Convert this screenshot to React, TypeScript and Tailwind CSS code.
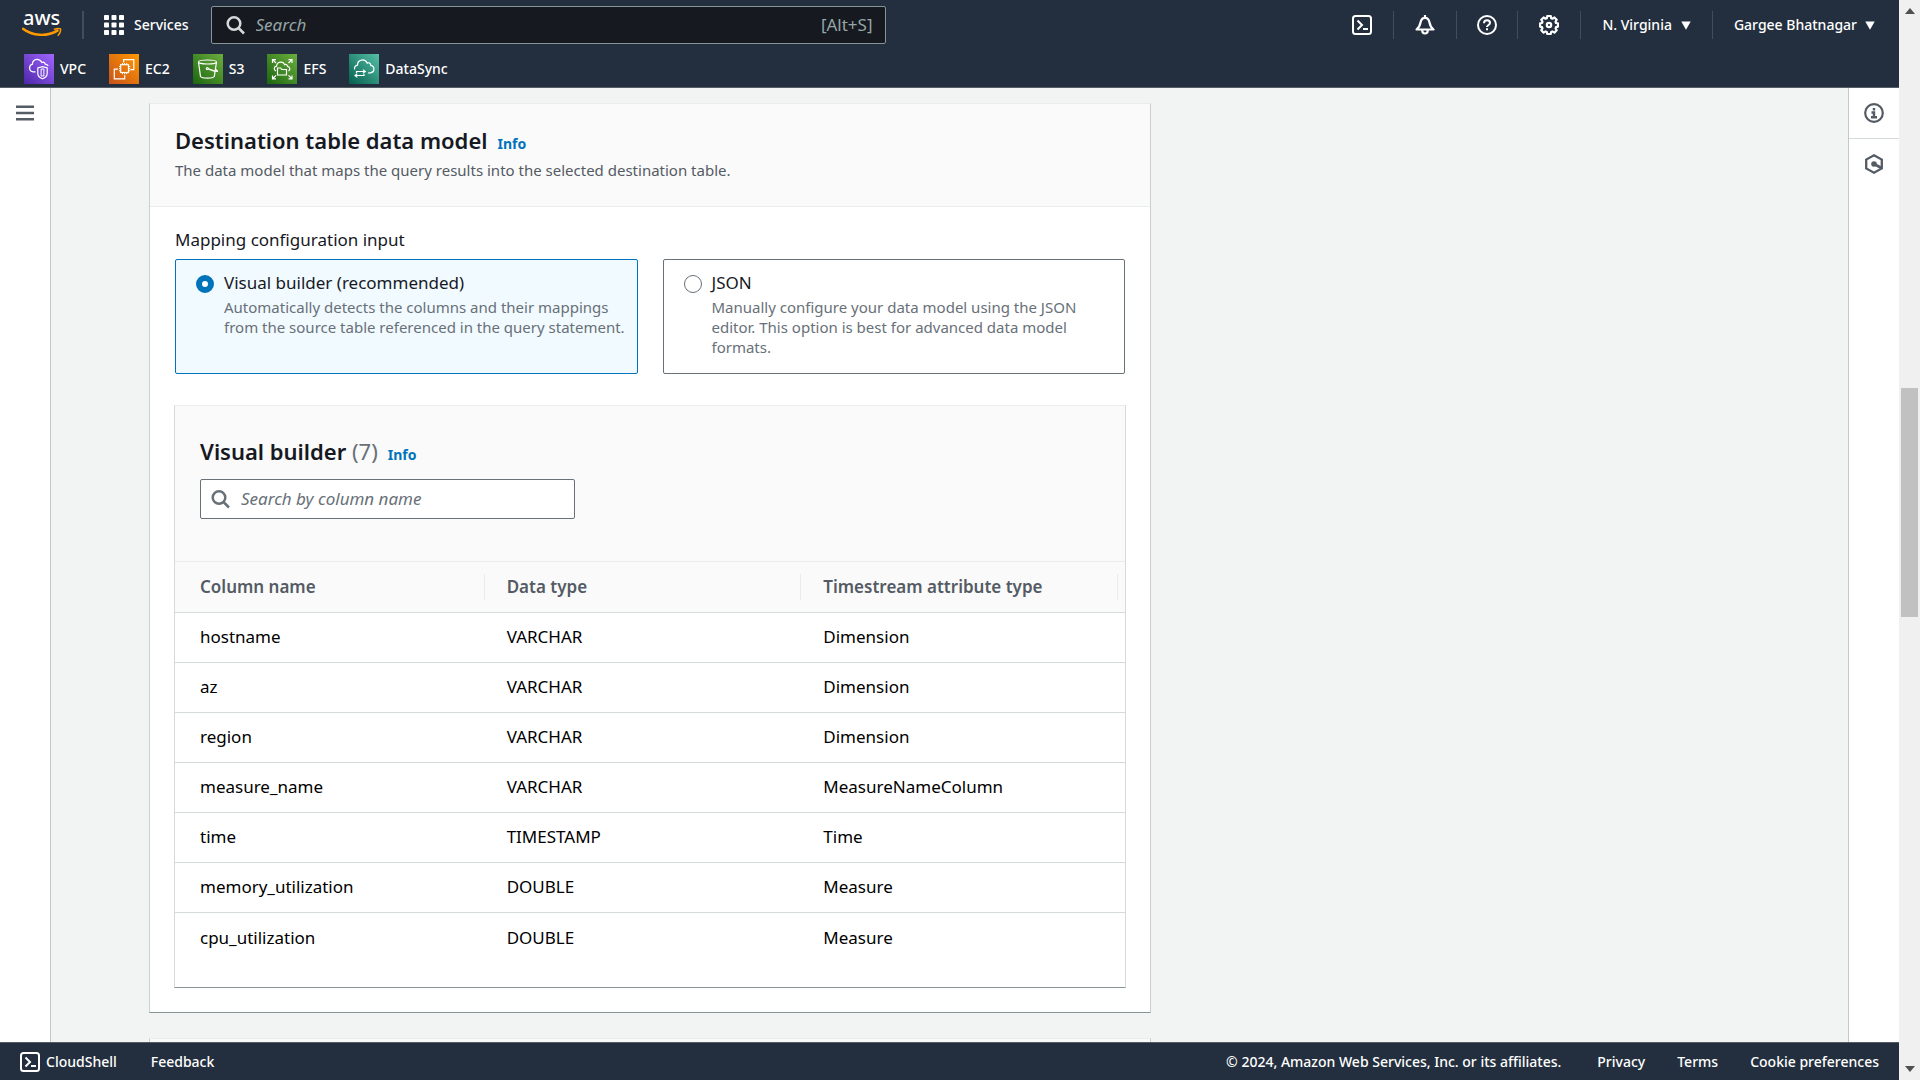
import { useState } from 'react'
import type { ReactNode } from 'react'

interface Column {
  name: string
  type: string
  attribute: string
}

const columns: Column[] = [
  { name: 'hostname', type: 'VARCHAR', attribute: 'Dimension' },
  { name: 'az', type: 'VARCHAR', attribute: 'Dimension' },
  { name: 'region', type: 'VARCHAR', attribute: 'Dimension' },
  { name: 'measure_name', type: 'VARCHAR', attribute: 'MeasureNameColumn' },
  { name: 'time', type: 'TIMESTAMP', attribute: 'Time' },
  { name: 'memory_utilization', type: 'DOUBLE', attribute: 'Measure' },
  { name: 'cpu_utilization', type: 'DOUBLE', attribute: 'Measure' },
]

const headings = ['Column name', 'Data type', 'Timestream attribute type']

const mappingOptions = [
  {
    id: 'visual',
    label: 'Visual builder (recommended)',
    description:
      'Automatically detects the columns and their mappings from the source table referenced in the query statement.',
  },
  {
    id: 'json',
    label: 'JSON',
    description:
      'Manually configure your data model using the JSON editor. This option is best for advanced data model formats.',
  },
]

function AwsLogo() {
  return (
    <svg width="40" height="48" viewBox="0 0 40 48" aria-label="aws">
      <text x="1" y="24" fill="#fff" fontSize="20" fontWeight="500" fontFamily="Noto Sans, sans-serif">
        aws
      </text>
      <path d="M1 27.800C10.500 35.200 25 35.800 35.500 29.600" fill="none" stroke="#ff9900" strokeWidth="2.400" strokeLinecap="round" />
      <path d="M32.500 28.200c2.500-.8 5-.9 6-.3.500 1.600-.4 4.200-2.300 6.400" fill="none" stroke="#ff9900" strokeWidth="1.500" strokeLinecap="round" />
    </svg>
  )
}

function GridIcon() {
  return (
    <svg width="20" height="20" viewBox="0 0 20 20" fill="#fff" aria-hidden="true">
      {[0, 7.5, 15].map((y) =>
        [0, 7.5, 15].map((x) => <rect key={`${x}-${y}`} x={x} y={y} width="5" height="5" rx="0.8" />)
      )}
    </svg>
  )
}

function SearchIcon({ className }: { className: string }) {
  return (
    <svg width="20" height="20" viewBox="0 0 20 20" fill="none" stroke="currentColor" strokeWidth="2.500" className={className} aria-hidden="true">
      <circle cx="8" cy="8.500" r="6.300" />
      <path d="m12.500 13 5.500 5.500" />
    </svg>
  )
}

function TerminalIcon() {
  return (
    <svg width="20" height="20" viewBox="0 0 20 20" fill="none" stroke="currentColor" strokeWidth="2" aria-hidden="true">
      <rect x="1" y="1" width="18" height="18" rx="2.500" />
      <path d="m5.500 5.500 4.500 4.500-4.500 4.500M11 14h5" />
    </svg>
  )
}

function BellIcon() {
  return (
    <svg width="20" height="20" viewBox="0 0 20 20" fill="none" stroke="currentColor" strokeWidth="2.200" strokeLinejoin="round" aria-hidden="true">
      <path d="M10 0v2.500M1.500 14.500C4 12.500 5 10.500 5.500 7.500 6 4.500 7.500 2.800 10 2.800s4 1.700 4.500 4.700c.5 3 1.500 5 4 7z" />
      <path d="M7.300 14.500v1.300a2.700 2.700 0 0 0 5.400 0v-1.300" />
    </svg>
  )
}

function HelpIcon() {
  return (
    <svg width="20" height="20" viewBox="0 0 20 20" fill="none" stroke="currentColor" strokeWidth="2" aria-hidden="true">
      <circle cx="10" cy="10" r="9" />
      <path d="M7 8.300C7 6.300 8.200 5.200 10 5.200s3 1.100 3 2.700c0 2-3 2.100-3 4.100" />
      <path d="M10 13.300v2" />
    </svg>
  )
}

function GearIcon() {
  return (
    <svg width="20" height="20" viewBox="0 0 20 20" fill="none" stroke="currentColor" strokeWidth="2.200" strokeLinejoin="round" aria-hidden="true">
      <path d="M8.300 1h3.400l.5 2.200 1.200.5 2-1.200 2.300 2.300-1.200 2 .5 1.200 2 .4v3.200l-2 .5-.5 1.200 1.200 2-2.300 2.300-2-1.200-1.200.5-.5 2.100H8.300l-.5-2.100-1.200-.5-2 1.200-2.300-2.300 1.200-2-.5-1.200-2-.5V8.400l2-.4.5-1.200-1.200-2 2.300-2.300 2 1.200 1.200-.5z" />
      <circle cx="10" cy="10" r="2.200" />
    </svg>
  )
}

function Caret() {
  return (
    <svg width="10" height="9" viewBox="0 0 10 9" fill="currentColor" aria-hidden="true">
      <path d="M.3.500h9.400L5 8.800z" />
    </svg>
  )
}

function MenuIcon() {
  return (
    <svg width="18" height="16" viewBox="0 0 18 16" stroke="currentColor" strokeWidth="2.500" aria-hidden="true">
      <path d="M0 1.700h18M0 8h18M0 14.300h18" />
    </svg>
  )
}

function InfoIcon() {
  return (
    <svg width="20" height="20" viewBox="0 0 20 20" fill="none" stroke="currentColor" strokeWidth="2.200" aria-hidden="true">
      <circle cx="10" cy="10" r="8.800" />
      <path d="M10 5v2.500M7.500 9.500H10V14M7 14.200h6" strokeWidth="2.400" />
    </svg>
  )
}

function HexIcon() {
  return (
    <svg width="20" height="20" viewBox="0 0 20 20" fill="none" stroke="currentColor" strokeWidth="2.300" aria-hidden="true">
      <path d="m10 1.300 7.800 4.300v8.800L10 18.700l-7.800-4.300V5.600z" />
      <circle cx="10" cy="10" r="2.800" fill="currentColor" stroke="none" />
      <path d="m10 10 7.500 4" strokeWidth="2.600" />
    </svg>
  )
}

interface ServiceIconProps {
  id: string
  from: string
  to: string
  children: ReactNode
}

function ServiceIcon({ id, from, to, children }: ServiceIconProps) {
  return (
    <svg width="30" height="30" viewBox="0 0 30 30" aria-hidden="true">
      <defs>
        <linearGradient id={id} x1="0" y1="1" x2="1" y2="0">
          <stop offset="0" stopColor={from} />
          <stop offset="1" stopColor={to} />
        </linearGradient>
      </defs>
      <rect width="30" height="30" fill={`url(#${id})`} />
      <g fill="none" stroke="#fff" strokeWidth="1.200">
        {children}
      </g>
    </svg>
  )
}

const favorites = [
  {
    name: 'VPC',
    icon: (
      <ServiceIcon id="vpc" from="#4d27a8" to="#a166ff">
        <path d="M11.500 17.800H9.300c-2.200-.3-3.700-1.800-3.700-3.900 0-2 1.200-3.400 2.900-3.800C8.300 7.500 10.300 5.400 13 5.400c2.200 0 4 1.200 4.900 3.200 1.300-.9 3-.3 3.300 1.500 1.500.2 2.500.9 3 2" />
        <path d="m18.500 12.600 4.700 1.300v5.300c0 2.600-1.800 4.500-4.700 5.600-2.900-1.100-4.700-3-4.700-5.600v-5.300z" />
        <path d="M17.100 15v7M19.900 15v7M17.100 15h2.800M17.100 22h2.800" strokeWidth="1" />
      </ServiceIcon>
    ),
  },
  {
    name: 'EC2',
    icon: (
      <ServiceIcon id="ec2" from="#c8511b" to="#ff9900">
        <path d="M14.600 8.500V5.600h10.200v10H21.500M9 15.200H5.300v9.600h10.400v-3.500" />
        <rect x="11.700" y="10.700" width="7.800" height="7.800" />
        <path d="M13.500 9v1.500M15.600 9v1.500M17.700 9v1.500M13.500 18.700v1.500M15.600 18.700v1.500M17.700 18.700v1.500M10 12.500h1.500M10 14.600h1.500M10 16.700h1.500M19.700 12.500h1.500M19.700 14.600h1.500M19.700 16.700h1.500" strokeWidth="1" />
      </ServiceIcon>
    ),
  },
  {
    name: 'S3',
    icon: (
      <ServiceIcon id="s3" from="#1b660f" to="#6cae3e">
        <ellipse cx="14.500" cy="8" rx="9" ry="2" />
        <path d="M5.500 8l2 14.500c1.500 2.200 12.300 2.200 13.800 0L23.500 8" />
        <circle cx="14.300" cy="14.500" r="1" />
        <path d="M15.300 14.900c3 1.300 6.500 2.500 9 2.600.6-.6-.6-1.600-2.300-2.500" />
      </ServiceIcon>
    ),
  },
  {
    name: 'EFS',
    icon: (
      <ServiceIcon id="efs" from="#1b660f" to="#6cae3e">
        <path d="M5.500 9V5.600H9M5.800 5.800 9 9M21.500 5.600H25V9M24.700 5.800 21.500 9M5.500 21.500v3.300H9M5.800 24.500 9 21.300M21.500 24.800H25v-3.300M24.700 24.500l-3.200-3.200" />
        <path d="M9 17c-2.500-1-2.300-4.500.6-4.800.4-5 6.600-5.300 8-1.600 1.600-.7 2.800.2 3 1.800 2.600.5 3 3.600.9 4.600" />
        <path d="M10.500 21v-7h3.200l1 1.500H19.500V21z" />
      </ServiceIcon>
    ),
  },
  {
    name: 'DataSync',
    icon: (
      <ServiceIcon id="datasync" from="#055f4e" to="#56c0a7">
        <path d="M5.600 15.500c-.5-2.200.7-4 2.900-4.400-.2-5.700 7.700-7 9.700-2 1.700-.9 3.300.1 3.600 2.300 4.300.8 4 6.800-.2 7.400h-2.400" />
        <path d="M7.500 19v-1.500h8.800M14 15.600l2.300 1.900-2.300 1.900M15 20v1.500H6M8.300 19.600l-2.300 1.900 2.300 1.900" />
      </ServiceIcon>
    ),
  },
]

function Divider() {
  return <span className="h-7 w-px bg-[#414d5c]" />
}

function Header() {
  return (
    <header className="h-[88px] shrink-0 border-b border-[#545b64] bg-[#232f3e] text-sm font-medium text-white">
      <div className="flex h-[50px] items-center">
        <a href="#" className="ml-[22px]">
          <AwsLogo />
        </a>
        <span className="ml-5 h-7 w-0.5 bg-[#414d5c]" />
        <button className="ml-5 flex items-center gap-2.5">
          <GridIcon />
          Services
        </button>
        <label className="ml-[22px] flex h-[38px] w-[675px] items-center rounded-xs border border-[#879596] bg-[#16191f] px-3 text-[#95a5a6]">
          <SearchIcon className="ml-0.5 text-[#d5dbdb]" />
          <input
            type="search"
            aria-label="Search"
            placeholder="Search"
            className="ml-2.5 min-w-0 flex-1 bg-transparent text-[17px] font-normal outline-none placeholder:italic placeholder:text-[#95a5a6]"
          />
          <span className="text-[17px] font-normal">[Alt+S]</span>
        </label>
        <nav className="ml-auto mr-6 flex items-center">
          <button aria-label="CloudShell" className="mr-[21px]">
            <TerminalIcon />
          </button>
          <Divider />
          <button aria-label="Notifications" className="mx-[21px]">
            <BellIcon />
          </button>
          <Divider />
          <button aria-label="Help" className="mx-5">
            <HelpIcon />
          </button>
          <Divider />
          <button aria-label="Settings" className="mx-[21px]">
            <GearIcon />
          </button>
          <Divider />
          <button className="mx-[21px] flex items-center gap-[9px]">
            N. Virginia
            <Caret />
          </button>
          <Divider />
          <button className="ml-[21px] flex items-center gap-2">
            Gargee Bhatnagar
            <Caret />
          </button>
        </nav>
      </div>
      <nav className="flex items-center gap-[23px] pl-6 pt-1">
        {favorites.map((service) => (
          <a key={service.name} href="#" className="flex items-center gap-1.5">
            {service.icon}
            {service.name}
          </a>
        ))}
      </nav>
    </header>
  )
}

function InfoLink() {
  return (
    <a href="#" className="text-sm font-bold text-[#0073bb]">
      Info
    </a>
  )
}

function MappingInput() {
  const [mode, setMode] = useState('visual')

  return (
    <fieldset className="px-px">
      <legend className="mb-[7px] text-[17px] leading-6">Mapping configuration input</legend>
      <div className="grid grid-cols-2 gap-[25px]">
        {mappingOptions.map((option) => (
          <label
            key={option.id}
            className="flex min-h-[115px] gap-2.5 rounded-xs border border-[#687078] pb-3 pl-5 pr-2.5 pt-[11px] has-checked:border-[#0073bb] has-checked:bg-[#f1faff]"
          >
            <input
              type="radio"
              name="mapping"
              checked={mode === option.id}
              onChange={() => setMode(option.id)}
              className="mt-1 size-[18px] shrink-0 appearance-none rounded-full border border-[#687078] bg-white checked:border-[6px] checked:border-[#0073bb]"
            />
            <span>
              <span className="block text-[17px] leading-6">{option.label}</span>
              <span className="mt-0.5 block text-[15px] leading-5 text-[#687078]">{option.description}</span>
            </span>
          </label>
        ))}
      </div>
    </fieldset>
  )
}

function VisualBuilder() {
  return (
    <section className="mt-[31px] border border-t-[#eaeded] border-x-[#d5dbdb] border-b-[#879596]">
      <div className="border-b border-[#eaeded] bg-[#fafafa] px-[25px] pb-[42px] pt-[30px]">
        <div className="flex items-baseline gap-2.5">
          <h3 className="text-[22px] font-semibold leading-[30px]">
            Visual builder <span className="font-normal text-[#687078]">(7)</span>
          </h3>
          <InfoLink />
        </div>
        <label className="mt-[13px] flex h-10 w-[375px] items-center rounded-xs border border-[#687078] bg-white px-2.5 text-[#687078]">
          <SearchIcon className="" />
          <input
            type="search"
            aria-label="Search by column name"
            placeholder="Search by column name"
            className="ml-2.5 min-w-0 flex-1 text-[17px] outline-none placeholder:italic placeholder:text-[#687078]"
          />
        </label>
      </div>
      <table className="mb-[25px] w-full table-fixed text-left text-[17px]">
        <thead className="bg-[#fafafa] text-[#545b64]">
          <tr className="h-[50px] border-b border-[#d5dbdb]">
            {headings.map((heading) => (
              <th key={heading} className="pl-[15px] pr-[7px] font-semibold first:pl-[25px]">
                <div className="border-r border-[#eaeded]">{heading}</div>
              </th>
            ))}
          </tr>
        </thead>
        <tbody className="text-black">
          {columns.map((column) => (
            <tr key={column.name} className="h-[50px] border-b border-[#d5dbdb] last:border-b-0">
              <td className="pl-[25px]">{column.name}</td>
              <td className="pl-[15px]">{column.type}</td>
              <td className="pl-[15px]">{column.attribute}</td>
            </tr>
          ))}
        </tbody>
      </table>
    </section>
  )
}

function Footer() {
  return (
    <footer className="flex h-[38px] shrink-0 items-center border-t border-[#545b64] bg-[#232f3e] px-5 text-sm font-medium text-white">
      <button className="flex items-center gap-1.5">
        <TerminalIcon />
        CloudShell
      </button>
      <button className="ml-[34px]">Feedback</button>
      <span className="ml-auto">© 2024, Amazon Web Services, Inc. or its affiliates.</span>
      <a href="#" className="ml-9">Privacy</a>
      <a href="#" className="ml-8">Terms</a>
      <a href="#" className="ml-8">Cookie preferences</a>
    </footer>
  )
}

function Scrollbar() {
  return (
    <div className="flex w-[21px] shrink-0 flex-col items-center bg-[#f0f0f0] py-2 text-[#505050]">
      <svg width="10" height="6" viewBox="0 0 10 6" fill="currentColor" aria-hidden="true">
        <path d="M5 0l5 6H0z" />
      </svg>
      <div className="flex-[374]" />
      <div className="w-[17px] flex-[229] bg-[#c1c1c1]" />
      <div className="flex-[449]" />
      <svg width="10" height="6" viewBox="0 0 10 6" fill="currentColor" aria-hidden="true">
        <path d="M5 6l5-6H0z" />
      </svg>
    </div>
  )
}

export default function App() {
  return (
    <div className="flex h-screen overflow-hidden bg-[#f2f3f3] font-['Noto_Sans',sans-serif] text-[#16191f]">
      <div className="flex min-w-0 flex-1 flex-col">
        <Header />
        <div className="flex min-h-0 flex-1">
          <aside className="w-[51px] shrink-0 border-r border-[#c1c9c9] bg-white pt-[17px] text-[#545b64]">
            <button aria-label="Open navigation" className="ml-4 block">
              <MenuIcon />
            </button>
          </aside>
          <main className="min-w-0 flex-1 overflow-hidden pl-[98px] pr-12 pt-[15px]">
            <section className="max-w-[1002px] border border-t-[#eaeded] border-x-[#c9d0d0] border-b-[#879596] bg-white">
              <div className="border-b border-[#eaeded] bg-[#fafafa] px-[25px] pb-[25px] pt-[21px]">
                <div className="flex items-baseline gap-2.5">
                  <h2 className="text-[22px] font-semibold leading-[30px]">Destination table data model</h2>
                  <InfoLink />
                </div>
                <p className="mt-1 text-[15px] leading-[22px] text-[#545b64]">
                  The data model that maps the query results into the selected destination table.
                </p>
              </div>
              <div className="px-6 pb-6 pt-[21px]">
                <MappingInput />
                <VisualBuilder />
              </div>
            </section>
            <section className="mt-[25px] h-20 max-w-[1002px] border border-t-[#eaeded] border-x-[#c9d0d0] bg-[#fafafa]" />
          </main>
          <aside className="w-[51px] shrink-0 border-l border-[#c1c9c9] bg-white text-[#545b64]">
            <button aria-label="Info panel" className="flex h-[51px] w-full items-center justify-center border-b border-[#d5dbdb]">
              <InfoIcon />
            </button>
            <button aria-label="Tutorials" className="flex h-[50px] w-full items-center justify-center">
              <HexIcon />
            </button>
          </aside>
        </div>
        <Footer />
      </div>
      <Scrollbar />
    </div>
  )
}
